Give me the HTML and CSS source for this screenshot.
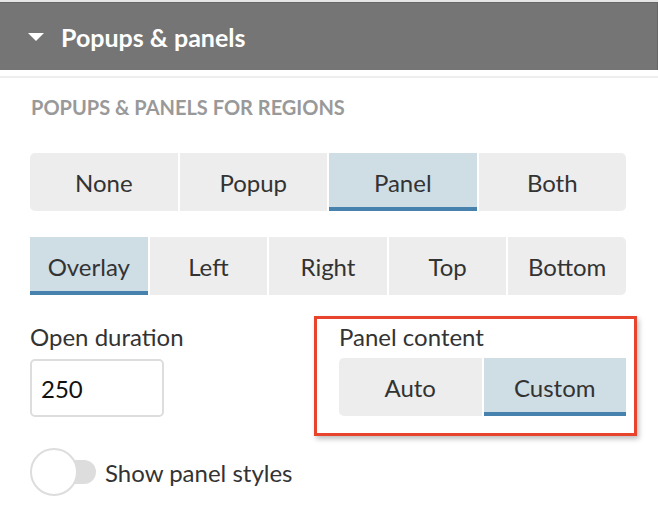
FILE: index.html
```html
<!DOCTYPE html>
<html lang="en">
<head>
  <meta charset="UTF-8">
  <meta name="viewport" content="width=device-width, initial-scale=1.0">
  <title>Popups &amp; panels</title>
  <link rel="stylesheet" href="styles.css">
</head>
<body>
  <div class="panel">
    <div class="panel-header">
      <span class="caret"></span>
      <h2>Popups &amp; panels</h2>
    </div>

    <div class="panel-body">
      <p class="section-title">Popups &amp; panels for regions</p>

      <div class="segmented first">
        <button>None</button>
        <button>Popup</button>
        <button class="active">Panel</button>
        <button>Both</button>
      </div>

      <div class="segmented">
        <button class="active">Overlay</button>
        <button>Left</button>
        <button>Right</button>
        <button>Top</button>
        <button>Bottom</button>
      </div>

      <div class="field-row">
        <div class="field">
          <label for="duration">Open duration</label>
          <input type="text" id="duration" value="250">
        </div>

        <div class="field highlight">
          <label>Panel content</label>
          <div class="segmented">
            <button>Auto</button>
            <button class="active">Custom</button>
          </div>
        </div>
      </div>

      <div class="toggle-row">
        <span class="toggle"><span class="knob"></span></span>
        <span class="toggle-label">Show panel styles</span>
      </div>
    </div>
  </div>
</body>
</html>
```

FILE: styles.css
```css
body {
  margin: 0;
  font-family: 'Lato', 'Liberation Sans', sans-serif;
  background: #fff;
  color: #333;
}

.panel {
  width: 658px;
  border-top: 2px solid #e6e6e6;
}

.panel-header {
  display: flex;
  align-items: center;
  height: 68px;
  padding-left: 28px;
  background-color: #757575;
  border-top: 1px solid #666;
  border-right: 1px solid #666;
  box-sizing: border-box;
}

.caret {
  width: 0;
  height: 0;
  border-left: 8px solid transparent;
  border-right: 8px solid transparent;
  border-top: 8px solid #fff;
  margin-right: 17px;
}

.panel-header h2 {
  margin: 0;
  color: #fff;
  font-size: 25px;
  font-weight: bold;
}

.panel-body {
  margin-top: 6px;
  border-top: 2px solid #eee;
  padding: 0 32px 0 30px;
}

.section-title {
  margin: 17px 0 0 1px;
  color: #999;
  font-size: 20px;
  line-height: 24px;
  font-weight: bold;
  text-transform: uppercase;
}

.segmented {
  display: flex;
  gap: 2px;
  margin-top: 26px;
}

.segmented.first {
  margin-top: 34px;
}

.segmented button {
  flex: 1;
  height: 58px;
  border: none;
  border-bottom: 4px solid transparent;
  background-color: #ededed;
  color: #333;
  font-family: inherit;
  font-size: 24px;
  padding: 4px 0 0;
  cursor: pointer;
}

.segmented button:first-child {
  border-radius: 5px 0 0 5px;
}

.segmented button:last-child {
  border-radius: 0 5px 5px 0;
}

.segmented button.active {
  background-color: #cfdde5;
  border-bottom-color: #4682ad;
  border-radius: 0;
}

.field-row {
  display: flex;
  justify-content: space-between;
  margin-top: 21px;
  margin-right: -11px;
}

.field {
  padding-top: 7px;
}

.field label {
  display: block;
  font-size: 24px;
  line-height: 28px;
}

.field input {
  display: block;
  width: 134px;
  height: 58px;
  box-sizing: border-box;
  margin-top: 8px;
  padding: 0 9px;
  border: 2px solid #ddd;
  border-radius: 5px;
  font-family: inherit;
  font-size: 24px;
  color: #111;
}

.field.highlight {
  width: 323px;
  box-sizing: border-box;
  padding: 4px 8px 17px 22px;
  border: 3px solid #e8432d;
  box-shadow: 2px 3px 5px rgba(0, 0, 0, 0.25);
}

.highlight .segmented {
  margin-top: 7px;
}

.toggle-row {
  display: flex;
  align-items: center;
  margin-top: 12px;
}

.toggle {
  position: relative;
  width: 66px;
  height: 48px;
  display: flex;
  align-items: center;
}

.toggle::before {
  content: '';
  width: 56px;
  height: 24px;
  margin-left: 10px;
  border-radius: 12px;
  background-color: #ddd;
}

.knob {
  position: absolute;
  left: 0;
  top: 0;
  width: 44px;
  height: 44px;
  border: 2px solid #ddd;
  border-radius: 50%;
  background-color: #fff;
}

.toggle-label {
  margin-left: 9px;
  font-size: 24px;
}
```
